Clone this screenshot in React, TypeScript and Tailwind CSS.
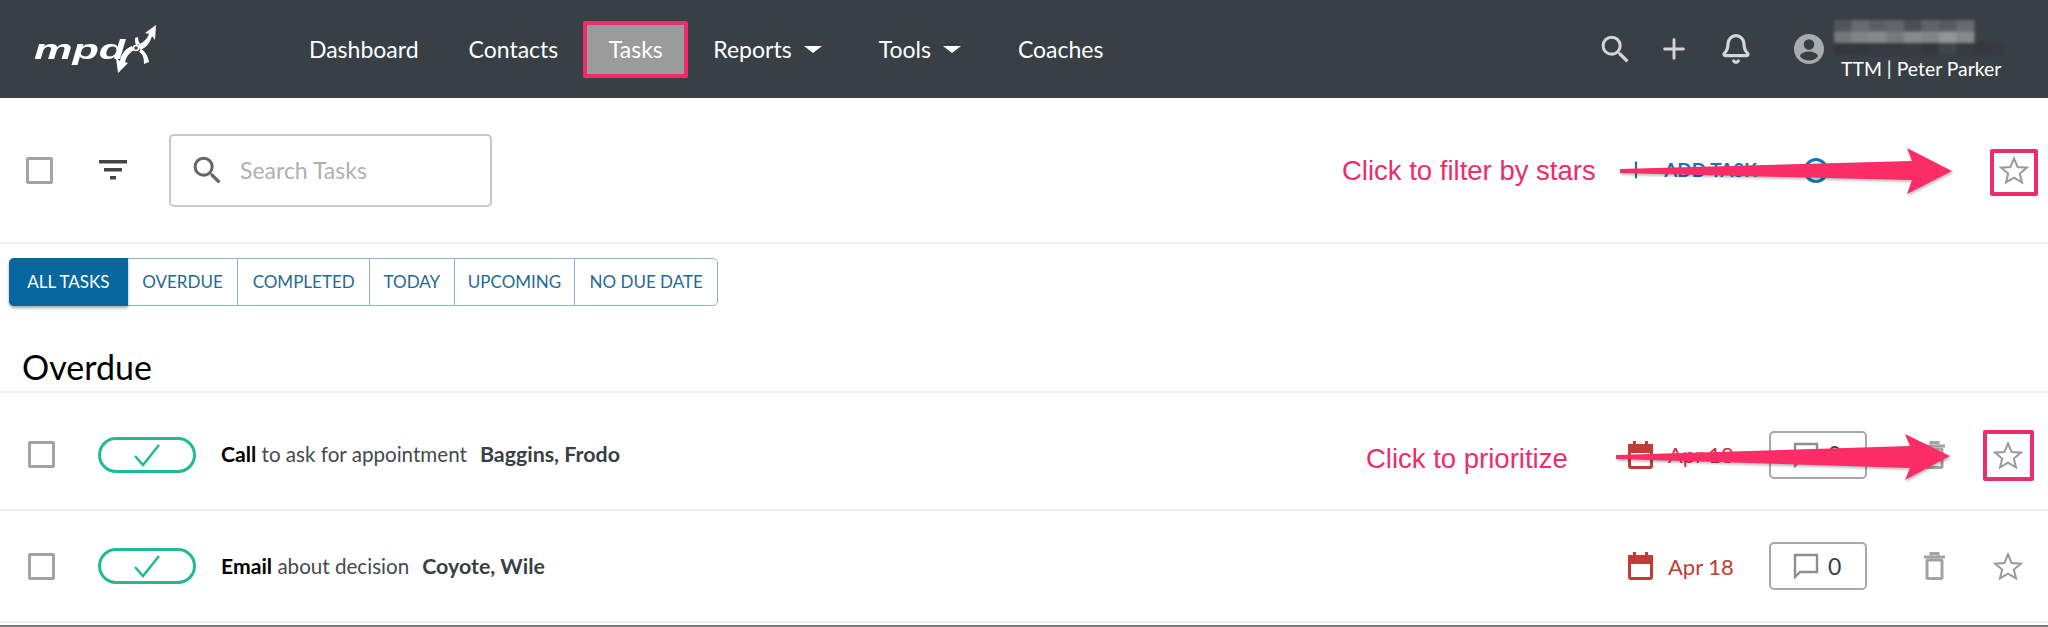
import { Bell, Plus } from "lucide-react";

const font = "font-['Lato','Noto_Sans',sans-serif]";

function Checkbox() {
  return <div className="h-[27px] w-[27px] shrink-0 rounded-[2px] border-[3px] border-[#a3a3a3] bg-white" />;
}

function StarIcon({ className }: { className?: string }) {
  return (
    <svg viewBox="0 0 30 28" className={`h-[28px] w-[30px] shrink-0 ${className ?? ""}`} fill="none" stroke="#9a9a9a" strokeWidth="2">
      <path d="M15 2.5 L18.6 11 L27.8 11.7 L20.8 17.6 L23 26.4 L15 21.7 L7 26.4 L9.2 17.6 L2.2 11.7 L11.4 11 Z" />
    </svg>
  );
}

function SearchIcon({ className }: { className?: string }) {
  return (
    <svg viewBox="0 0 24 24" className={`h-[37px] w-[37px] shrink-0 ${className ?? ""}`} fill="currentColor">
      <path d="M15.5 14h-.79l-.28-.27A6.471 6.471 0 0 0 16 9.5 6.5 6.5 0 1 0 9.5 16c1.61 0 3.09-.59 4.23-1.57l.27.28v.79l5 4.99L20.49 19l-4.99-5zm-6 0C7.01 14 5 11.99 5 9.5S7.01 5 9.5 5 14 7.01 14 9.5 11.99 14 9.5 14z" />
    </svg>
  );
}

function Logo() {
  return (
    <div className="flex w-[124px] items-center">
      <span className="mt-[2px] w-[81px] origin-left scale-x-[1.6] font-['Liberation_Sans',sans-serif] text-[27px] leading-none font-bold whitespace-nowrap text-white italic">
        mpd
      </span>
      <svg viewBox="0 0 45 52" className="-mt-[1px] h-[52px] w-[45px] shrink-0 text-white" fill="currentColor">
        <path d="M25 22 C31 19 34 16 36 11 L32 10 L43 2 L42 17 L39 13 C37 20 33 25 27 27 Z" />
        <path d="M21 27 C16 30 13 34 12 39 L15 40 L5 50 L3 35 L7 38 C8 31 13 25 19 23 Z" />
        <path d="M26 29 C30 31 31 35 31 41 L36 39 C35 33 32 28 28 26 Z" />
        <path d="M23 22 C22 20 22 18 22 15 L25 14 C25 17 26 19 27 21 Z" />
        <circle cx="23" cy="25" r="2.5" fill="#383f45" stroke="currentColor" strokeWidth="1.5" />
      </svg>
    </div>
  );
}

function NavLink({ label, caret, className }: { label: string; caret?: boolean; className?: string }) {
  return (
    <a className={`flex items-center text-[23px] leading-none text-white ${className ?? ""}`}>
      {label}
      {caret ? <span className="ml-[12px] h-0 w-0 border-x-[9px] border-t-[7px] border-x-transparent border-t-white" /> : null}
    </a>
  );
}

function Redacted() {
  const rows = [
    ["#50565a", "#666b6f", "#5a6064", "#60666a", "#4a5054", "#5e6468", "#565c60", "#666b6f"],
    ["#74787b", "#808487", "#85898b", "#75797c", "#868a8c", "#808487", "#929597", "#85898b"],
    ["#32383d", "#333a3f", "#353b40", "#343a3f", "#363c41", "#33393e", "#3f4549", "#353b40", "#33393e", "#353b40"],
  ];
  return (
    <svg viewBox="0 0 176 40" className="h-[40px] w-[176px] blur-[1.5px]">
      {rows.map((row, y) =>
        row.map((fill, x) => <rect key={`${x}-${y}`} x={x * 17.5 + 7} y={y * 11.5 + 3} width="18" height="12" fill={fill} />),
      )}
    </svg>
  );
}

function Header() {
  return (
    <header className="flex h-[98px] shrink-0 items-center bg-[#383f45] pl-[34px]">
      <Logo />
      <nav className="ml-[151px] flex items-center">
        <NavLink label="Dashboard" />
        <NavLink label="Contacts" className="ml-[50px]" />
        <a className="ml-[25px] flex h-[57px] w-[105px] items-center justify-center rounded-[2px] border-[4px] border-[#ee2c6c] bg-[#9b9b9b] text-[23px] text-white">
          Tasks
        </a>
        <NavLink label="Reports" caret className="ml-[25px]" />
        <NavLink label="Tools" caret className="ml-[57px]" />
        <NavLink label="Coaches" className="ml-[57px]" />
      </nav>
      <div className="ml-auto flex items-center pr-[45px] text-[#d4d5d6]">
        <SearchIcon />
        <Plus size={32} strokeWidth={2.2} className="ml-[24px]" />
        <Bell size={32} strokeWidth={2.4} className="ml-[30px]" />
        <svg viewBox="0 0 24 24" className="ml-[39px] h-[36px] w-[36px] text-[#a9abad]" fill="currentColor">
          <path d="M12 2C6.48 2 2 6.48 2 12s4.48 10 10 10 10-4.48 10-10S17.52 2 12 2zm0 3.5a3.5 3.5 0 1 1 0 7 3.5 3.5 0 0 1 0-7zm0 14.2a7.7 7.7 0 0 1-6-2.9c.03-2 4-3.1 6-3.1s5.97 1.1 6 3.1a7.7 7.7 0 0 1-6 2.9z" />
        </svg>
        <div className="flex w-[176px] flex-col">
          <Redacted />
          <span className="ml-[14px] text-[19.4px] leading-[24px] whitespace-nowrap text-white">TTM | Peter Parker</span>
        </div>
      </div>
    </header>
  );
}

function Toolbar() {
  return (
    <div className="flex h-[146px] shrink-0 items-center border-b-2 border-[#f1f1f1] pr-[19px] pl-[26px]">
      <Checkbox />
      <svg viewBox="0 0 28 20" className="ml-[46px] h-[20px] w-[28px] text-[#444]" fill="currentColor">
        <rect x="0" y="0" width="28" height="3.5" />
        <rect x="5" y="8" width="18" height="3.5" />
        <rect x="11" y="16" width="6" height="3.5" />
      </svg>
      <div className="ml-[42px] flex h-[73px] w-[323px] items-center rounded-[5px] border-2 border-[#c8c8c8] pl-[18px]">
        <SearchIcon className="text-[#666]" />
        <span className="ml-[14px] text-[23px] text-[#b0b0b0]">Search Tasks</span>
      </div>
      <div className="ml-auto flex items-center text-[#0d76b8]">
        <Plus size={26} strokeWidth={2} />
        <span className="ml-[15px] text-[19px] font-bold">ADD TASK</span>
        <span className="ml-[47px] h-[25px] w-[24px] rounded-full border-[3px] border-[#0d76b8]" />
        <StarIcon className="ml-[171px]" />
      </div>
    </div>
  );
}

const tabs = [
  { label: "OVERDUE", width: "w-[110px]" },
  { label: "COMPLETED", width: "w-[132px]" },
  { label: "TODAY", width: "w-[85px]" },
  { label: "UPCOMING", width: "w-[121px]" },
  { label: "NO DUE DATE", width: "w-[143px]" },
];

function Tabs() {
  return (
    <div className="mt-[14px] ml-[9px] flex h-[48px] w-[709px] shrink-0 rounded-[5px] border border-[#8fb2c8] text-[17px] text-[#1f6a94]">
      <div className="-my-px -ml-px flex w-[119px] items-center justify-center rounded-l-[5px] bg-[#07689f] text-white shadow-[0_2px_3px_rgba(0,0,0,0.35)]">
        ALL TASKS
      </div>
      {tabs.map((t, i) => (
        <div key={t.label} className={`flex items-center justify-center ${t.width} ${i > 0 ? "border-l border-[#8fb2c8]" : ""}`}>
          {t.label}
        </div>
      ))}
    </div>
  );
}

function TaskRow({ action, subject, contact, className }: { action: string; subject: string; contact: string; className: string }) {
  return (
    <div className={`flex shrink-0 items-center border-b-2 border-[#efefef] pr-[25px] pl-[28px] ${className}`}>
      <Checkbox />
      <div className="ml-[43px] flex h-[36px] w-[98px] items-center justify-center rounded-full border-[3px] border-[#1fbb96]">
        <svg viewBox="0 0 28 24" className="h-[24px] w-[28px]" fill="none" stroke="#1fbb96" strokeWidth="2.5">
          <path d="M2 13 L10 22 L26 2" />
        </svg>
      </div>
      <p className="ml-[25px] text-[20.6px] whitespace-nowrap text-[#444a4f]">
        <b className="text-[21.2px] font-bold text-black">{action}</b> {subject}
        <b className="ml-[13px] text-[21.4px] font-bold text-[#383f45]">{contact}</b>
      </p>
      <div className="ml-auto flex items-center">
        <svg viewBox="0 0 25 28" className="h-[28px] w-[25px]" fill="none" stroke="#c23b36">
          <rect x="1.5" y="4.5" width="22" height="22" rx="1.5" strokeWidth="3" />
          <rect x="1.5" y="4.5" width="22" height="6" fill="#c23b36" strokeWidth="3" />
          <path d="M6.5 0 V5 M18.5 0 V5" strokeWidth="3" />
        </svg>
        <span className="ml-[15px] w-[64px] text-[22px] whitespace-nowrap text-[#c23b36]">Apr 18</span>
        <div className="ml-[37px] flex h-[48px] w-[98px] items-center rounded-[5px] border-2 border-[#a8a8a8] pl-[22px]">
          <svg viewBox="0 0 26 26" className="h-[26px] w-[26px]" fill="none" stroke="#8e8e8e" strokeWidth="2.4">
            <path d="M2 2 H24 V19 H7 L2 24 Z" />
          </svg>
          <span className="ml-[9px] text-[23px] text-[#383f45]">0</span>
        </div>
        <svg viewBox="0 0 21 28" className="ml-[57px] h-[28px] w-[21px]" fill="none" stroke="#a3a3a3" strokeWidth="3">
          <path d="M0 5 H21" />
          <path d="M7 3.5 V1.5 H14 V3.5" />
          <rect x="3" y="8" width="15" height="18.5" rx="1" />
        </svg>
        <StarIcon className="ml-[48px]" />
      </div>
    </div>
  );
}

// annotations drawn on top of the screenshot
function Annotations() {
  return (
    <div className="absolute inset-0 font-['Liberation_Sans',sans-serif] text-[#ee2c6c]">
      <span className="absolute top-[156px] left-[1342px] text-[27.5px] leading-[30px]">Click to filter by stars</span>
      <span className="absolute top-[444px] left-[1366px] text-[27.5px] leading-[30px]">Click to prioritize</span>
      <svg viewBox="0 0 2048 627" className="absolute inset-0 h-[627px] w-[2048px] drop-shadow-[1px_2px_1px_rgba(0,0,0,0.25)]">
        <path d="M1620 169 L1912 161 L1907 148 L1952 171 L1907 194 L1912 180 L1620 173 Z" fill="#fb2c66" />
        <path d="M1616 455 L1910 446 L1905 434 L1950 456 L1905 480 L1910 468 L1616 459 Z" fill="#fb2c66" />
      </svg>
      <div className="absolute top-[149px] left-[1990px] h-[47px] w-[48px] rounded-[2px] border-[4px] border-[#ee2c6c]" />
      <div className="absolute top-[430px] left-[1983px] h-[51px] w-[51px] rounded-[2px] border-[4px] border-[#ee2c6c]" />
    </div>
  );
}

export default function App() {
  return (
    <div className={`relative flex h-[627px] w-[2048px] flex-col overflow-hidden bg-white ${font}`}>
      <Header />
      <Toolbar />
      <Tabs />
      <h2 className="flex h-[87px] shrink-0 items-end border-b-2 border-[#efefef] pb-[4px] pl-[22px] text-[34px] leading-[40px] text-black">
        Overdue
      </h2>
      <TaskRow action="Call" subject="to ask for appointment" contact="Baggins, Frodo" className="h-[118px] pt-[7px]" />
      <TaskRow action="Email" subject="about decision" contact="Coyote, Wile" className="h-[112px]" />
      <div className="mt-[2px] h-[2px] shrink-0 bg-[#777]" />
      <Annotations />
    </div>
  );
}
